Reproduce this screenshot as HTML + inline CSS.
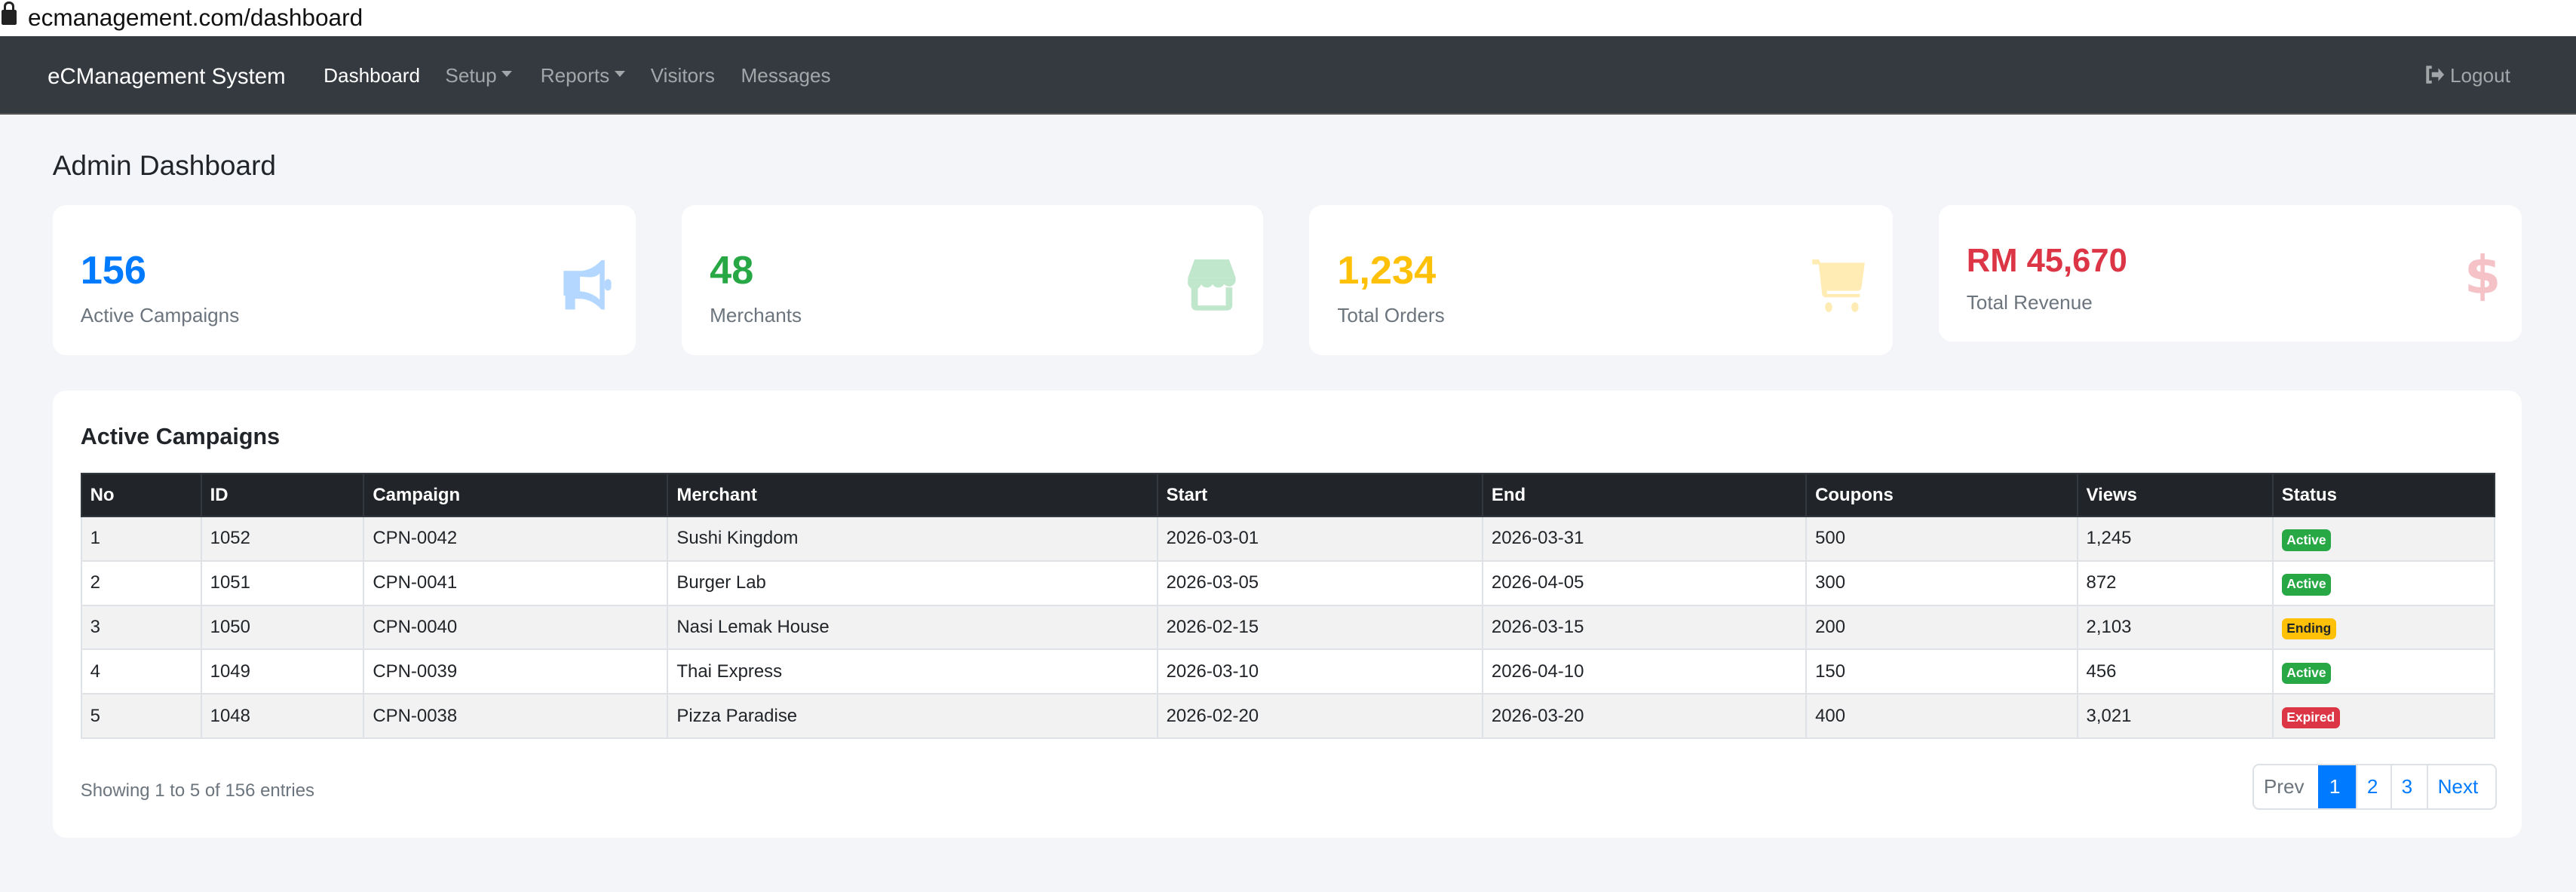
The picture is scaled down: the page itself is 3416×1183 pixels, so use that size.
<!DOCTYPE html>
<html><head><meta charset="utf-8">
<style>
html{zoom:2.17857}
*{box-sizing:border-box;margin:0;padding:0}
body{width:1568px;height:543px;overflow:hidden;background:#f4f5f9;font-family:"Liberation Sans",sans-serif;color:#212529;position:relative}
.url{position:absolute;left:0;top:0;width:1568px;height:22px;background:#fff;font-size:14.5px;line-height:22px;padding-left:17px;color:#111}
.lock{position:absolute;left:1px;top:6px;width:9px;height:9px;background:#222;border-radius:1px}
.lock:before{content:"";position:absolute;left:1.5px;top:-5px;width:6px;height:7px;border:1.6px solid #222;border-bottom:none;border-radius:3px 3px 0 0;box-sizing:border-box}
.nav{position:absolute;left:0;top:22px;width:1568px;height:48px;background:#343a40;border-bottom:1px solid #555}
.nav span{position:absolute;top:17px;font-size:12px;color:rgba(255,255,255,.55)}
.caret{display:inline-block;border-left:3.5px solid transparent;border-right:3.5px solid transparent;border-top:4px solid rgba(255,255,255,.55);vertical-align:3px;margin-left:3px}
h1{position:absolute;left:32px;top:91px;font-size:17px;font-weight:normal}
.card{position:absolute;background:#fff;border-radius:8px}
.num{position:absolute;left:17px;font-size:24px;font-weight:bold}
.lbl{position:absolute;left:17px;font-size:12px;color:#6c757d}
.ic{position:absolute}
table{position:absolute;left:17px;top:50px;border-collapse:collapse;font-size:11px}
th{background:#212529;color:#fff;text-align:left;height:26px;padding:0 5px;border:1px solid #32383e;font-size:11px}
td{height:27px;padding:0 5px;border:1px solid #dee2e6}
tbody tr:nth-child(odd) td{background:#f2f2f2}
.b{display:inline-block;font-size:8px;font-weight:bold;color:#fff;border-radius:3px;padding:1px 3px;line-height:11px;margin-top:2px}
.pg{position:absolute;left:1339px;top:227px;height:28px;display:flex;border:1px solid #dee2e6;border-radius:4px;overflow:hidden;font-size:12px}
.pg div{line-height:26px;padding:0 6px;color:#007bff;border-left:1px solid #dee2e6}
</style></head><body>
<div class="url"><div class="lock"></div>ecmanagement.com/dashboard</div>
<div class="nav">
<span style="left:29px;top:17px;font-size:13.5px;color:#fff">eCManagement System</span>
<span style="left:197px;color:#fff">Dashboard</span>
<span style="left:271px">Setup<i class="caret"></i></span>
<span style="left:329px">Reports<i class="caret"></i></span>
<span style="left:396px">Visitors</span>
<span style="left:451px">Messages</span>
<span style="left:1476px"><svg width="12" height="11" viewBox="0 0 12 11" style="vertical-align:-1px"><path d="M4 1H1.5v9H4" fill="none" stroke="rgba(255,255,255,.55)" stroke-width="1.8"/><path d="M4 4h4V1.5L11.5 5.5 8 9.5V7H4z" fill="rgba(255,255,255,.55)"/></svg> Logout</span>
</div>
<h1>Admin Dashboard</h1>

<div class="card" style="left:32px;top:125px;width:355px;height:91px">
<div class="num" style="top:26px;color:#007bff">156</div><div class="lbl" style="top:60px">Active Campaigns</div>
<svg class="ic" style="left:309px;top:33px" width="32" height="31" viewBox="0 0 32 31"><path d="M2 7h10c5 0 10-3 13-6.5h2v30h-2C22 27 17 24 12 24H9v6.5H3V22H2z" fill="#b3d7ff"/><rect x="27" y="12" width="4" height="7" rx="2" fill="#b3d7ff"/><path d="M12 10.5c4 0 9 1.5 12-2v16c-3-3-8-5-12-5z" fill="#fff"/></svg>
</div>
<div class="card" style="left:415px;top:125px;width:354px;height:91px">
<div class="num" style="top:26px;color:#28a745">48</div><div class="lbl" style="top:60px">Merchants</div>
<svg class="ic" style="left:306px;top:32px" width="33" height="32" viewBox="0 0 33 32"><path d="M6 1h21l4 11H2z" fill="#c0e6cb"/><path d="M2 12h29v2a4 4 0 0 1-7 2a4 4 0 0 1-7 0a4 4 0 0 1-7 0a4 4 0 0 1-8-2z" fill="#c0e6cb"/><path d="M4 18h4v11h17V18h4v11a3 3 0 0 1-3 3H7a3 3 0 0 1-3-3z" fill="#c0e6cb"/></svg>
</div>
<div class="card" style="left:797px;top:125px;width:355px;height:91px">
<div class="num" style="top:26px;color:#ffc107">1,234</div><div class="lbl" style="top:60px">Total Orders</div>
<svg class="ic" style="left:305px;top:32px" width="34" height="34" viewBox="0 0 34 34"><path d="M1 1h4l1 2h27l-2 15c0 1-1 2-2 2H10l0 2h20v2H9c-1 0-2-1-2-2L5 4H1z" fill="#ffecb5"/><ellipse cx="11" cy="30" rx="2.2" ry="3" fill="#ffecb5"/><ellipse cx="27" cy="30" rx="2.2" ry="3" fill="#ffecb5"/></svg>
</div>
<div class="card" style="left:1180px;top:125px;width:355px;height:83px">
<div class="num" style="top:23px;font-size:20px;color:#dc3545">RM 45,670</div><div class="lbl" style="top:52px">Total Revenue</div>
<div class="ic" style="left:320px;top:24px;font-size:32px;font-weight:bold;color:#f5c2c7;font-family:'DejaVu Sans',sans-serif">$</div>
</div>

<div class="card" style="left:32px;top:238px;width:1503px;height:272px">
<div style="position:absolute;left:17px;top:20px;font-size:14px;font-weight:bold">Active Campaigns</div>
<table>
<thead><tr><th style="width:73px">No</th><th style="width:99px">ID</th><th style="width:185px">Campaign</th><th style="width:298px">Merchant</th><th style="width:198px">Start</th><th style="width:197px">End</th><th style="width:165px">Coupons</th><th style="width:119px">Views</th><th style="width:135px">Status</th></tr></thead>
<tbody>
<tr><td>1</td><td>1052</td><td>CPN-0042</td><td>Sushi Kingdom</td><td>2026-03-01</td><td>2026-03-31</td><td>500</td><td>1,245</td><td><span class="b" style="background:#28a745">Active</span></td></tr>
<tr><td>2</td><td>1051</td><td>CPN-0041</td><td>Burger Lab</td><td>2026-03-05</td><td>2026-04-05</td><td>300</td><td>872</td><td><span class="b" style="background:#28a745">Active</span></td></tr>
<tr><td>3</td><td>1050</td><td>CPN-0040</td><td>Nasi Lemak House</td><td>2026-02-15</td><td>2026-03-15</td><td>200</td><td>2,103</td><td><span class="b" style="background:#ffc107;color:#212529">Ending</span></td></tr>
<tr><td>4</td><td>1049</td><td>CPN-0039</td><td>Thai Express</td><td>2026-03-10</td><td>2026-04-10</td><td>150</td><td>456</td><td><span class="b" style="background:#28a745">Active</span></td></tr>
<tr><td>5</td><td>1048</td><td>CPN-0038</td><td>Pizza Paradise</td><td>2026-02-20</td><td>2026-03-20</td><td>400</td><td>3,021</td><td><span class="b" style="background:#dc3545">Expired</span></td></tr>
</tbody>
</table>
<div style="position:absolute;left:17px;top:237px;font-size:11px;color:#6c757d">Showing 1 to 5 of 156 entries</div>
<div class="pg"><div style="border-left:none;color:#6c757d;width:39px">Prev</div><div style="background:#007bff;color:#fff;width:23px;border-color:#007bff">1</div><div style="width:21px">2</div><div style="width:22px">3</div><div style="width:42px">Next</div></div>
</div>
</body></html>
